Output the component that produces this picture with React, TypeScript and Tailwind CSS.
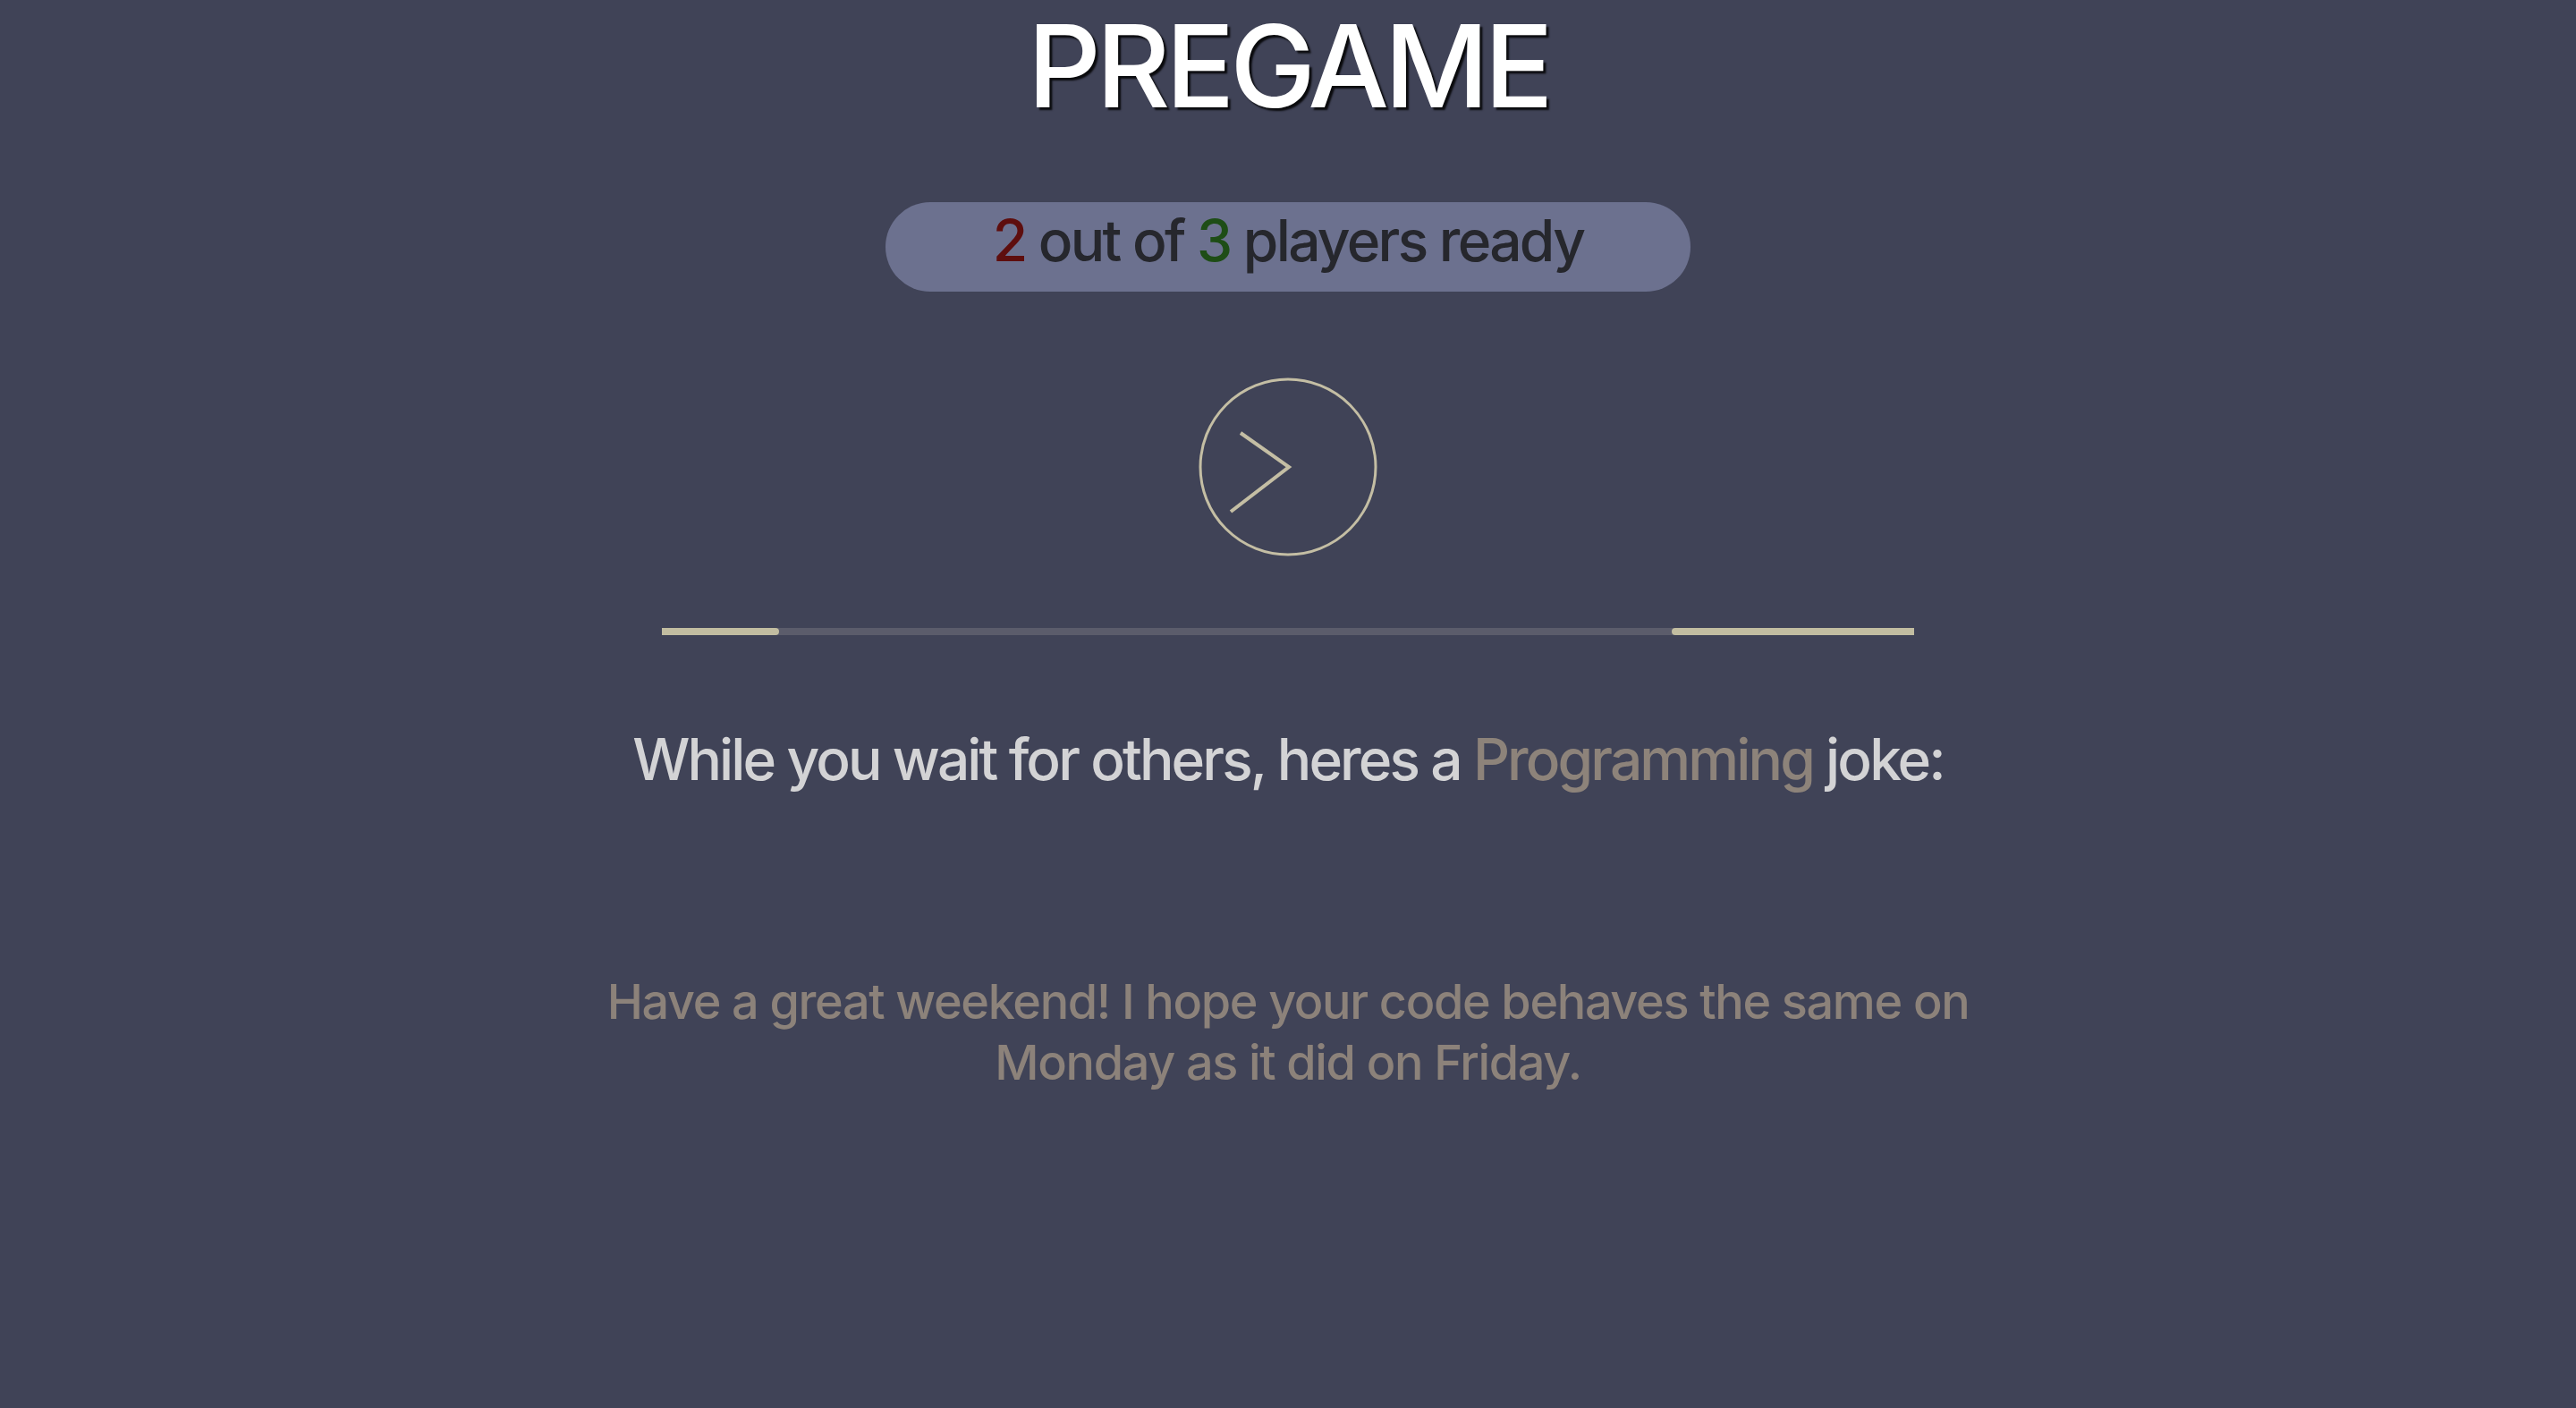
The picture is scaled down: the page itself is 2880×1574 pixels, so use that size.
import React from "react";

export default function App() {
  return (
    <div className="min-h-screen w-full bg-[#404357] flex flex-col items-center font-['Inter','Liberation_Sans',sans-serif]">
      <h1 className="mt-[10px] text-[128px] leading-none font-medium text-white tracking-[-0.041em] [text-shadow:3px_3px_2px_rgba(0,0,0,0.85)]">
        PREGAME
      </h1>

      <div className="mt-[88px] w-[900px] h-[100px] rounded-full bg-[#6c718f] flex justify-center pt-[11px]">
        <p className="text-[64px] leading-none font-medium text-[#26272d] tracking-[-0.042em]">
          <span className="text-[#5e0e0e]">2</span> out of{" "}
          <span className="text-[#1e4d16]">3</span> players ready
        </p>
      </div>

      <button className="mt-[96px] w-[200px] h-[200px] block">
        <svg width="200" height="200" viewBox="0 0 200 200" fill="none">
          <circle cx="100" cy="100" r="98" stroke="#c4bea4" strokeWidth="3" />
          <polyline
            points="47,62 101,100 36,150"
            stroke="#c4bea4"
            strokeWidth="4"
            fill="none"
          />
        </svg>
      </button>

      <div className="mt-[80px] w-[1400px] h-[8px] bg-[#5b5c6b] flex">
        <div className="w-[131px] h-full bg-[#c2bda1] rounded-r-full" />
        <div className="flex-1" />
        <div className="w-[271px] h-full bg-[#c2bda1] rounded-l-full" />
      </div>

      <h2 className="mt-[107px] text-[64px] leading-none font-medium text-[#d3d3d5] tracking-[-0.045em]">
        While you wait for others, heres a{" "}
        <span className="text-[#8d837a]">Programming</span> joke:
      </h2>

      <p className="mt-[205px] text-[54px] leading-[67.5px] font-medium text-[#8c827a] text-center tracking-[-0.025em]">
        Have a great weekend! I hope your code behaves the same on
        <br />
        Monday as it did on Friday.
      </p>
    </div>
  );
}
